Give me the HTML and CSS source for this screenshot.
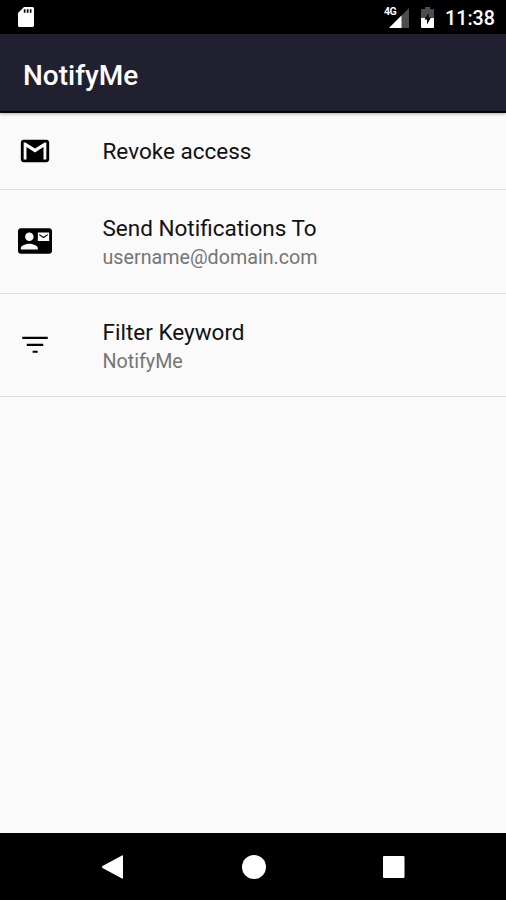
FILE: index.html
```html
<!DOCTYPE html>
<html lang="en">
<head>
<meta charset="utf-8">
<title>NotifyMe</title>
<link rel="stylesheet" href="styles.css">
</head>
<body>
<div class="screen">
  <div class="status-bar">
    <svg class="sd-card" viewBox="0 0 16 20"><path fill="#fff" fill-rule="evenodd" d="M6 0h8.500q1.500 0 1.500 1.500v17q0 1.500-1.500 1.500h-13Q0 20 0 18.500V6zM5.800 2.200v3.500h1.700V2.200zm3 0v3.500h1.700V2.200zm3 0v3.500h1.700V2.200z"/></svg>
    <div class="indicators">
      <div class="signal">
        <svg viewBox="0 0 20 20"><path fill="#4d4d4d" d="M20 0v20H0z"/><path fill="#fff" d="M12.500 7.500V20H0z"/></svg>
        <span class="network">4G</span>
      </div>
      <svg class="battery" viewBox="0 0 13 21"><path fill="#4d4d4d" d="M4 0h5v2h3q1 0 1 1v8H0V3q0-1 1-1h3z"/><path fill="#fff" d="M0 11h13v9q0 1-1 1H1q-1 0-1-1z"/><path d="M7.500 6 3.500 12.500h2.500v5l4-7H7.500z"/></svg>
      <span class="clock">11:38</span>
    </div>
  </div>
  <header class="app-bar"><h1>NotifyMe</h1></header>
  <main class="settings">
    <div class="row row-single">
      <svg class="icon" viewBox="0 0 24 24"><path d="M20 4H4c-1.100 0-2 .9-2 2v12c0 1.100.9 2 2 2h16c1.100 0 2-.9 2-2V6c0-1.100-.9-2-2-2zm0 14h-2V9.250L12 13 6 9.250V18H4V6h1.200l6.800 4.250L18.800 6H20v12z"/></svg>
      <div class="text"><div class="title">Revoke access</div></div>
    </div>
    <div class="row">
      <svg class="icon" viewBox="0 0 24 24"><path d="M21 8V7l-3 2-3-2v1l3 2 3-2zm1-5H2C.9 3 0 3.900 0 5v14c0 1.100.9 2 2 2h20c1.100 0 1.990-.9 1.990-2L24 5c0-1.100-.9-2-2-2zM8 6c1.660 0 3 1.340 3 3s-1.340 3-3 3-3-1.340-3-3 1.340-3 3-3zm6 12H2v-1c0-2 4-3.100 6-3.100s6 1.100 6 3.100v1zm8-6h-8V6h8v6z"/></svg>
      <div class="text two-line"><div class="title">Send Notifications To</div><div class="summary">username@domain.com</div></div>
    </div>
    <div class="row">
      <svg class="icon" viewBox="0 0 24 24"><path d="M10.300 17.500h3.600v-1.500h-3.600zM3 6.200v1.500h18V6.200zm3.200 6.500h11.600v-1.500H6.200z"/></svg>
      <div class="text two-line"><div class="title">Filter Keyword</div><div class="summary">NotifyMe</div></div>
    </div>
  </main>
  <nav class="nav-bar">
    <svg viewBox="0 0 24 24"><path d="M22 1v22q0 1-1 .5L1.500 13q-1.500-1 0-2L21 .5q1-.5 1 .5z"/></svg>
    <svg viewBox="0 0 24 24"><circle cx="12" cy="12" r="12"/></svg>
    <svg viewBox="0 0 24 24"><rect x="1" y="1" width="21.500" height="22" rx="1"/></svg>
  </nav>
</div>
</body>
</html>
```
FILE: styles.css
```css
* { box-sizing: border-box; }
body { margin: 0; font-family: Roboto, "Liberation Sans", sans-serif; }
svg { display: block; flex: none; }
.screen { height: 900px; display: flex; flex-direction: column; background: #fafafa; }
.status-bar {
  height: 34px; flex: none; background: #000; color: #fff;
  display: flex; justify-content: space-between; align-items: center;
  padding: 0 11px 0 18px;
}
.sd-card { width: 16px; height: 20px; }
.indicators { display: flex; align-items: center; }
.signal { position: relative; margin-right: 12px; }
.signal svg { width: 20px; height: 20px; margin-top: 1px; }
.network {
  position: absolute; left: -5px; top: 0;
  font-size: 10.500px; line-height: 10px; font-weight: 700; letter-spacing: -0.5px;
  background: #000;
}
.battery { width: 13px; height: 21px; margin-right: 11px; margin-top: 1px; }
.clock { font-size: 19.700px; font-weight: 500; line-height: 24px; margin-top: 4px; }
.app-bar {
  height: 79px; flex: none; background: #212031; color: #fff;
  display: flex; align-items: center; padding: 7px 23px 0;
  border-bottom: 2px solid #08080c;
  box-shadow: 0 1px 3px rgba(0, 0, 0, 0.3);
}
.app-bar h1 { margin: 0; font-size: 28px; line-height: 34px; font-weight: 500; }
.settings { flex: 1; }
.row {
  height: 103.500px; display: flex; align-items: center;
  padding-left: 18px; border-bottom: 1px solid #dcdcdc;
}
.row-single { height: 77px; }
.two-line { padding-top: 3px; }
.icon { width: 34px; height: 34px; margin-right: 50.500px; }
.title { font-size: 22.500px; line-height: 30px; color: #111; }
.summary { font-size: 19.700px; line-height: 29px; color: #757575; }
.nav-bar {
  height: 67px; flex: none; background: #000;
  display: flex; justify-content: center; align-items: center; gap: 116.500px;
  padding-left: 1px;
}
.nav-bar svg { width: 24px; height: 24px; fill: #fff; }
```
